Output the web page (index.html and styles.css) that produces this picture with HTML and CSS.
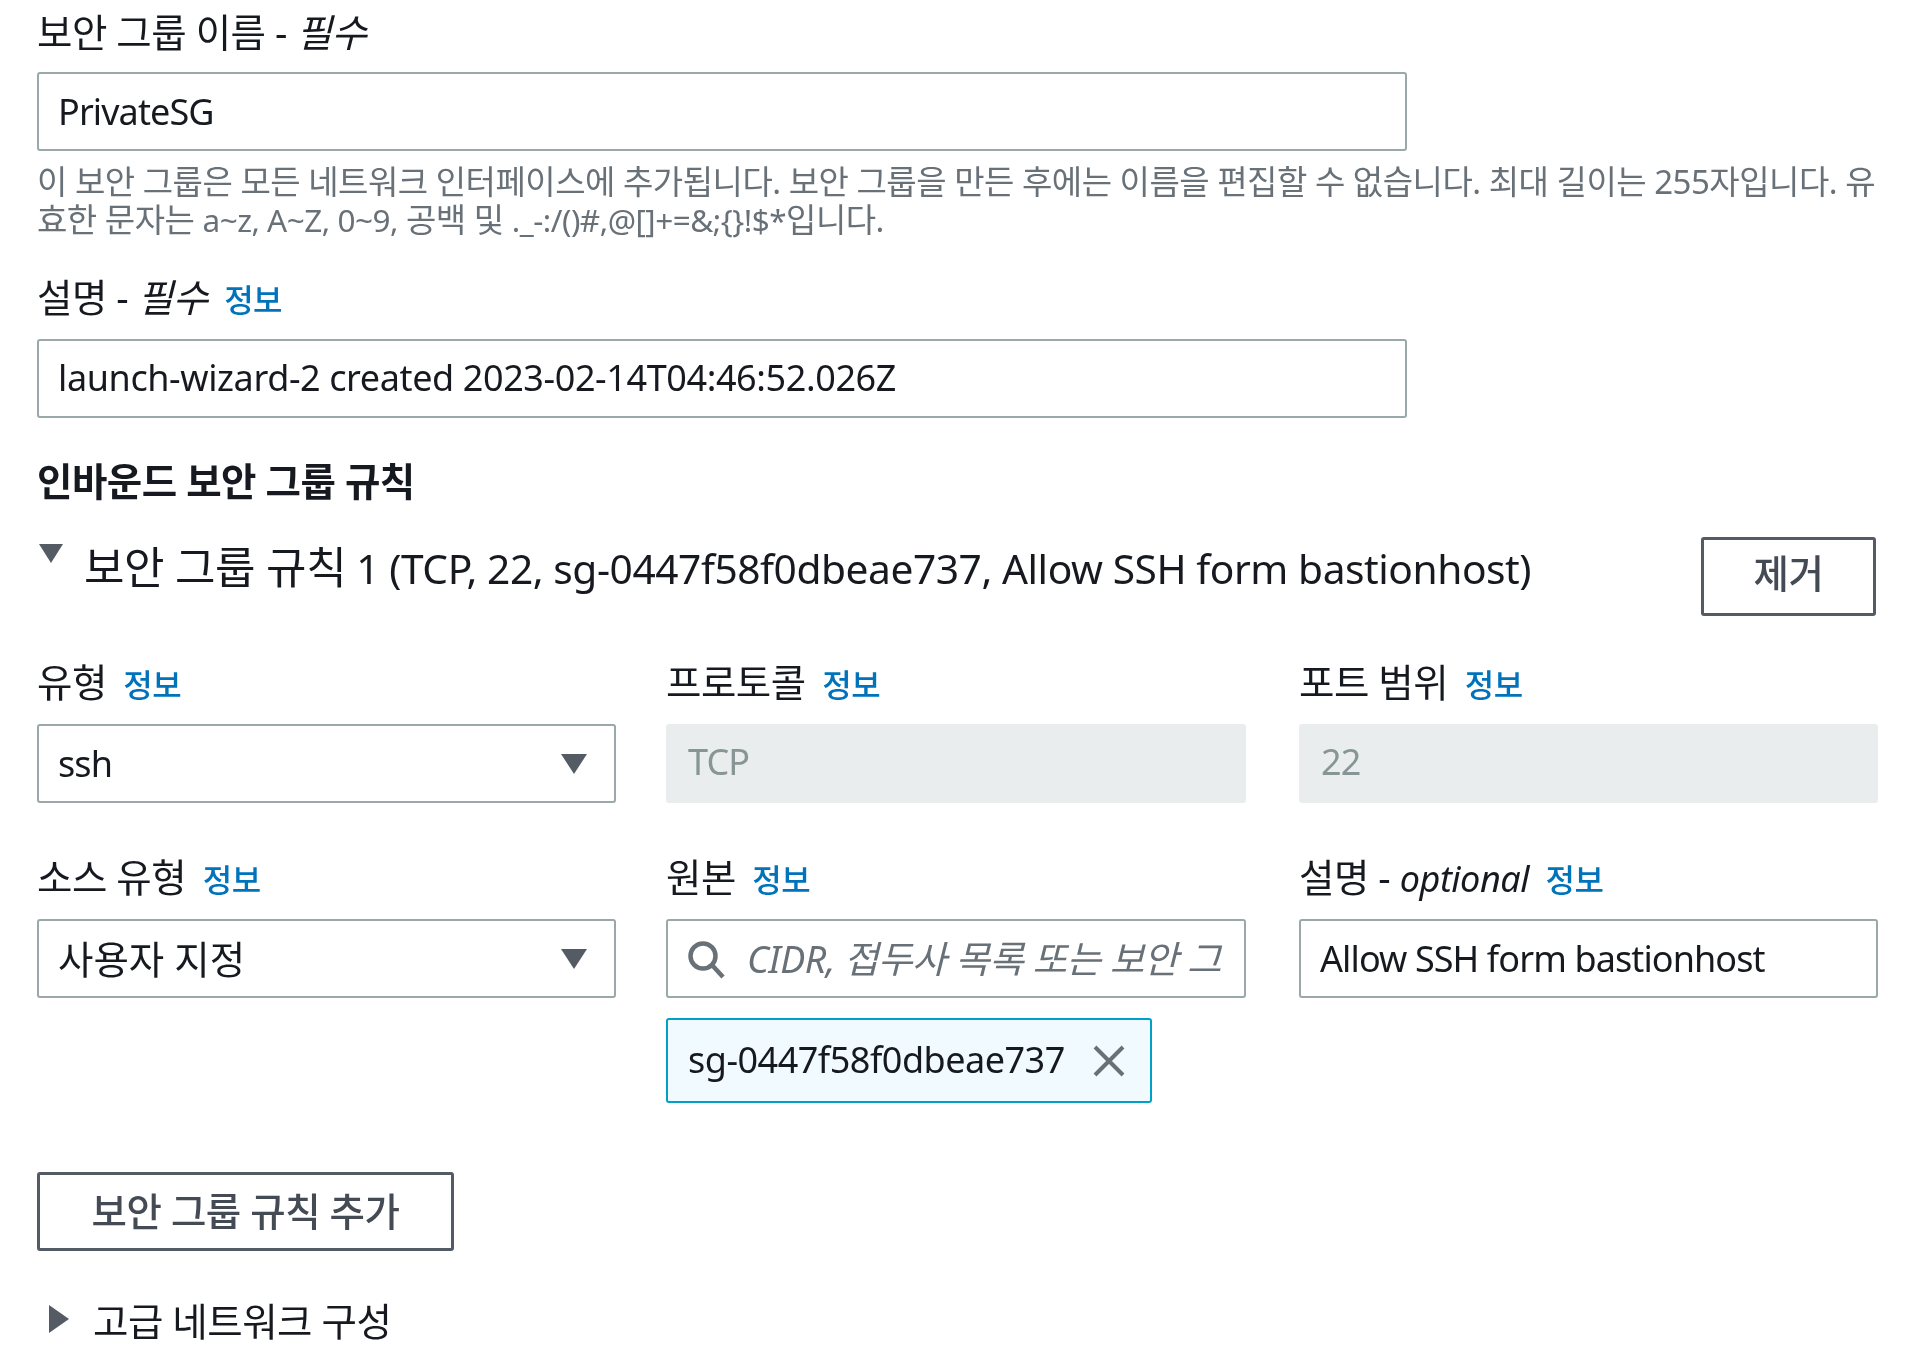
FILE: index.html
```html
<!DOCTYPE HTML>
<html lang="ko">
<head>
    <title>보안 그룹</title>
    <meta charset="UTF-8">
    <link rel="stylesheet" href="styles.css">
</head>
<body>
    <div class="field name-field">
        <label class="label">보안 그룹 이름 - <em>필수</em></label>
        <div class="input"><span>PrivateSG</span></div>
        <p class="hint">이 보안 그룹은 모든 네트워크 인터페이스에 추가됩니다. 보안 그룹을 만든 후에는 이름을 편집할 수 없습니다. 최대 길이는 255자입니다. 유효한 문자는 <span class="chars">a~z, A~Z, 0~9,</span> 공백 및 <span class="chars">._-:/()#,@[]+=&amp;;{}!$*</span>입니다.</p>
    </div>

    <div class="field desc-field">
        <label class="label">설명 - <em>필수</em> <a href="#" class="info">정보</a></label>
        <div class="input"><span>launch-wizard-2 created 2023-02-14T04:46:52.026Z</span></div>
    </div>

    <h2>인바운드 보안 그룹 규칙</h2>

    <div class="rule-head">
        <svg class="caret-down" width="26" height="20" viewBox="0 0 26 20"><path d="M1 1h24L13 20z"/></svg>
        <h3><span class="ko">보안 그룹 규칙</span> 1 (TCP, 22, sg-0447f58f0dbeae737, Allow SSH form bastionhost)</h3>
        <button class="btn remove">제거</button>
    </div>

    <div class="rule-grid">
        <div class="col">
            <label class="label">유형 <a href="#" class="info">정보</a></label>
            <div class="input select">
                <span>ssh</span>
                <svg width="26" height="20" viewBox="0 0 26 20"><path d="M0 0h26L13 20z"/></svg>
            </div>
        </div>
        <div class="col">
            <label class="label">프로토콜 <a href="#" class="info">정보</a></label>
            <div class="input disabled"><span>TCP</span></div>
        </div>
        <div class="col">
            <label class="label">포트 범위 <a href="#" class="info">정보</a></label>
            <div class="input disabled"><span>22</span></div>
        </div>

        <div class="col">
            <label class="label">소스 유형 <a href="#" class="info">정보</a></label>
            <div class="input select">
                <span class="ko lift">사용자 지정</span>
                <svg width="26" height="20" viewBox="0 0 26 20"><path d="M0 0h26L13 20z"/></svg>
            </div>
        </div>
        <div class="col">
            <label class="label">원본 <a href="#" class="info">정보</a></label>
            <div class="input search">
                <svg width="40" height="40" viewBox="0 0 40 40"><circle cx="17" cy="17" r="12.5"/><path d="M26 26l11 12"/></svg>
                <span class="placeholder">CIDR, 접두사 목록 또는 보안 그룹</span>
            </div>
            <div class="token">
                <span>sg-0447f58f0dbeae737</span>
                <svg width="34" height="34" viewBox="0 0 34 34"><path d="M3 3l28 28M31 3L3 31"/></svg>
            </div>
        </div>
        <div class="col">
            <label class="label">설명 - <em class="latin">optional</em> <a href="#" class="info">정보</a></label>
            <div class="input"><span>Allow SSH form bastionhost</span></div>
        </div>
    </div>

    <button class="btn add">보안 그룹 규칙 추가</button>

    <div class="advanced">
        <svg width="20" height="28" viewBox="0 0 20 28"><path d="M0 0l20 14L0 28z"/></svg>
        <span>고급 네트워크 구성</span>
    </div>
</body>
</html>
```

FILE: styles.css
```css
body{
    margin: 0;
    padding: 14px 40px 0 37px;
    height: 1370px;
    box-sizing: border-box;
    overflow: hidden;
    background: #fff;
    color: #16191f;
    font-size: 36px;
    font-family: "Noto Sans", "Noto Sans CJK KR", sans-serif;
    letter-spacing: -0.9px;
    filter: blur(0.6px);
}

.ko{
    font-size: 38.5px;
}

.label{
    display: block;
    height: 38px;
    font-size: 38.5px;
    letter-spacing: -0.5px;
    line-height: 36px;
    white-space: nowrap;
}

.label em{
    font-style: italic;
}

.label .latin{
    font-size: 36px;
}

.info{
    color: #0073bb;
    font-size: 32px;
    font-weight: 500;
    text-decoration: none;
    margin-left: 7px;
}

.field .input{
    width: 1370px;
}

.name-field .label{
    margin-bottom: 20px;
}

.input{
    box-sizing: border-box;
    height: 79px;
    display: flex;
    align-items: center;
    padding: 0 19px;
    background: #fff;
    border: 2px solid #9aa8a9;
    border-radius: 3px;
    white-space: nowrap;
    overflow: hidden;
}

.hint{
    margin: 12px 0 0;
    color: #687078;
    font-size: 33px;
    letter-spacing: -0.5px;
    line-height: 38px;
}

.chars{
    display: inline-block;
    font-size: 31.5px;
    line-height: 1;
}

.desc-field{
    margin-top: 40px;
}

.desc-field .label{
    margin-bottom: 22px;
}

.desc-field .input{
    padding-bottom: 3px;
    letter-spacing: -0.4px;
}

h2{
    margin: 44px 0 0;
    font-size: 38.5px;
    font-weight: 700;
    letter-spacing: -0.5px;
    line-height: 38px;
}

.rule-head{
    display: flex;
    align-items: flex-start;
    margin-top: 37px;
    padding-right: 4px;
}

.rule-head svg{
    margin: 6px 0 0 1px;
    fill: #545b64;
}

.rule-head h3{
    flex: 1;
    margin: 0 0 0 20px;
    font-size: 40.7px;
    font-weight: 400;
    letter-spacing: -0.45px;
    line-height: 60px;
    white-space: nowrap;
}

.rule-head h3 .ko{
    font-size: 44px;
}

.btn{
    box-sizing: border-box;
    height: 79px;
    background: #fff;
    color: #444b54;
    border: 3px solid #545b64;
    border-radius: 3px;
    font: inherit;
    font-size: 38.5px;
    font-weight: 500;
    letter-spacing: -0.5px;
    padding: 0 0 6px;
}

.remove{
    width: 175px;
    padding-bottom: 12px;
}

.rule-grid{
    display: grid;
    grid-template-columns: 579px 580px 582px;
    grid-template-rows: auto auto;
    column-gap: 50px;
    row-gap: 56px;
    align-items: start;
    margin-top: 48px;
}

.col:nth-child(3n){
    margin-left: 3px;
}

.col .label{
    margin-bottom: 22px;
}

.select{
    justify-content: space-between;
    padding-right: 27px;
}

.select svg{
    fill: #545b64;
}

.lift{
    margin-bottom: 4px;
    letter-spacing: 0;
}

.disabled{
    background: #eaeded;
    border-color: #eaeded;
    color: #879596;
    padding: 0 20px 4px;
}

.search{
    padding-left: 18px;
}

.search svg{
    flex: none;
    margin-right: 21px;
    fill: none;
    stroke: #687078;
    stroke-width: 4.5;
}

.placeholder{
    min-width: 0;
    overflow: hidden;
    margin-bottom: 5px;
    color: #687078;
    font-size: 37.5px;
    font-style: italic;
    letter-spacing: -0.5px;
}

.token{
    box-sizing: border-box;
    width: 486px;
    height: 85px;
    margin-top: 20px;
    display: flex;
    align-items: center;
    justify-content: space-between;
    padding: 0 24px 3px 20px;
    background: #f1faff;
    border: 2px solid #00a1c9;
    border-radius: 3px;
    letter-spacing: -0.5px;
}

.token svg{
    margin-top: 3px;
    fill: none;
    stroke: #687078;
    stroke-width: 4;
}

.add{
    display: block;
    width: 417px;
    margin-top: 69px;
}

.advanced{
    display: flex;
    align-items: center;
    margin: 40px 0 0 12px;
    gap: 24px;
    font-size: 38.5px;
    letter-spacing: -0.5px;
}

.advanced svg{
    fill: #545b64;
}
```
